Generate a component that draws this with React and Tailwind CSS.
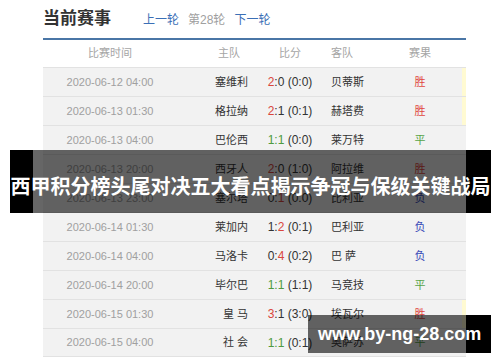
import React from "react";

const rows = [
  { time: "2020-06-12 04:00", home: "塞维利", score: [["2", "r"], [":0", ""]], half: "(0:0)", away: "贝蒂斯", res: "胜", hl: true },
  { time: "2020-06-13 01:30", home: "格拉纳", score: [["2", "r"], [":1", ""]], half: "(0:1)", away: "赫塔费", res: "胜", hl: true },
  { time: "2020-06-13 04:00", home: "巴伦西", score: [["1:1", "g"]], half: "(0:0)", away: "莱万特", res: "平" },
  { time: "2020-06-13 20:00", home: "西牙人", score: [["2", "r"], [":0", ""]], half: "(1:0)", away: "阿拉维", res: "胜" },
  { time: "2020-06-13 23:00", home: "塞尔塔", score: [["0:", ""], ["1", "r"]], half: "(0:0)", away: "比利亚", res: "负" },
  { time: "2020-06-14 01:30", home: "莱加内", score: [["1:", ""], ["2", "r"]], half: "(0:1)", away: "巴利亚", res: "负" },
  { time: "2020-06-14 04:00", home: "马洛卡", score: [["0:", ""], ["4", "r"]], half: "(0:2)", away: "巴 萨", res: "负" },
  { time: "2020-06-14 20:00", home: "毕尔巴", score: [["1:1", "g"]], half: "(1:1)", away: "马竞技", res: "平" },
  { time: "2020-06-15 01:30", home: "皇 马", score: [["3", "r"], [":1", ""]], half: "(3:0)", away: "埃瓦尔", res: "胜", hl: true },
  { time: "2020-06-15 04:00", home: "社 会", score: [["1:1", "g"]], half: "(0:1)", away: "奥萨苏", res: "平" },
];

const resColor = { 胜: "text-[#e0463e]", 平: "text-[#56a447]", 负: "text-[#3a4cb8]" };
const segColor = { r: "text-[#d9463c]", g: "text-[#4f9a40]", "": "text-[#333]" };

export default function App() {
  return (
    <div
      className="relative w-[500px] h-[362px] bg-white overflow-hidden"
      style={{ fontFamily: '"Liberation Sans", "Noto Sans CJK SC", sans-serif' }}
    >
      <div className="ml-[43px] w-[423px]">
        {/* Title + round nav */}
        <div className="flex items-center h-[38px] pb-[1px]">
          <span className="text-[17px] font-bold text-[#333] tracking-[0px]">当前赛事</span>
          <div className="flex items-center ml-[32px] mt-[3px] text-[12px] gap-[9px]">
            <span className="text-[#3b6fb6]">上一轮</span>
            <span className="text-[#a0a0a0]">第28轮</span>
            <span className="text-[#3b6fb6]">下一轮</span>
          </div>
        </div>
        <div className="h-[2px] bg-[#4a76a6]" />

        {/* Table header */}
        <div className="flex items-center h-[27px] bg-white text-[11px] text-[#a5a5a5]">
          <div className="w-[134px] text-center">比赛时间</div>
          <div className="w-[81px] text-right pr-[18px]">主队</div>
          <div className="w-[64px] text-center">比分</div>
          <div className="w-[70px] pl-[9px]">客队</div>
          <div className="w-[56px] text-center">赛果</div>
        </div>

        {/* Rows */}
        {rows.map((r, i) => (
          <div
            key={i}
            className={`flex items-center h-[29px] bg-[#f2f2f2] border-t border-[#e2e2e2] ${i === rows.length - 1 ? "border-b" : ""}`}
          >
            <div className="w-[134px] text-center text-[11px] text-[#a0a0a0]">{r.time}</div>
            <div className="w-[81px] text-right pr-[10px] text-[11px] text-[#333] whitespace-pre">{r.home}</div>
            <div className="w-[64px] text-center text-[12px] text-[#333] whitespace-nowrap">
              {r.score.map(([t, c], k) => (
                <span key={k} className={segColor[c]}>{t}</span>
              ))}{" "}
              {r.half}
            </div>
            <div className="w-[70px] pl-[9px] text-[11px] text-[#333] whitespace-pre">{r.away}</div>
            <div className={`w-[56px] text-center text-[11px] ${resColor[r.res]}`}>{r.res}</div>
            <div className="flex-1 self-stretch flex justify-end">
              {r.hl && <div className="w-[4px] bg-[#fffad2]" />}
            </div>
          </div>
        ))}
      </div>

      {/* Headline overlay band */}
      <div className="absolute left-[10px] top-[150px] w-[481px] h-[63px] flex">
        <div className="w-[23px] bg-black" />
        <div className="w-[433px] bg-black/60" />
        <div className="flex-1 bg-black" />
        <div
          className="absolute inset-0 flex items-center justify-center pt-[8px] text-white text-[20px] font-bold whitespace-nowrap"
          style={{ fontFamily: '"Noto Sans CJK SC", sans-serif' }}
        >
          西甲积分榜头尾对决五大看点揭示争冠与保级关键战局
        </div>
      </div>

      {/* Watermark */}
      <div className="absolute left-[308px] top-[315px] w-[183px] h-[38px] flex">
        <div className="w-[158px] bg-black/60" />
        <div className="flex-1 bg-black" />
        <div className="absolute inset-0 flex items-center pl-[10px] text-white text-[18px] font-bold whitespace-nowrap">
          www.by-ng-28.com
        </div>
      </div>
    </div>
  );
}
